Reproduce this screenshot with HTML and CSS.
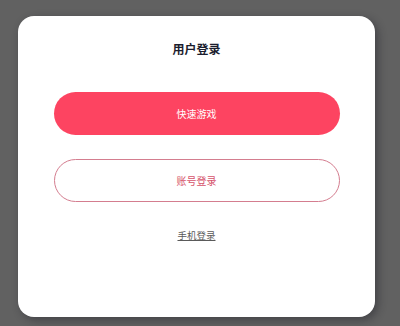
FILE: index.html
```html
<!DOCTYPE html>
<html lang="zh">
<head>
<meta charset="utf-8">
<link rel="stylesheet" href="styles.css">
</head>
<body>
<div class="card">
  <div class="title">用户登录</div>
  <button class="btn btn-primary">快速游戏</button>
  <button class="btn btn-outline">账号登录</button>
  <a class="link" href="#">手机登录</a>
</div>
</body>
</html>
```
FILE: styles.css
```css
html, body {
  margin: 0;
  padding: 0;
}
body {
  background: #616161;
  font-family: "Noto Sans CJK SC", "Noto Sans", sans-serif;
  width: 400px;
  height: 326px;
  overflow: hidden;
}
.card {
  margin: 16px 0 0 18px;
  width: 357px;
  height: 301px;
  box-sizing: border-box;
  background: #ffffff;
  border-radius: 16px;
  box-shadow: 3px 3px 8px rgba(30, 30, 40, 0.45);
  display: flex;
  flex-direction: column;
  align-items: center;
  padding-top: 25px;
}
.title {
  font-size: 12px;
  line-height: 16px;
  font-weight: 700;
  color: #1b1d2e;
}
.btn {
  width: 286px;
  height: 43px;
  border-radius: 22px;
  font-family: inherit;
  font-size: 10px;
  cursor: pointer;
  padding: 0;
}
.btn-primary {
  margin-top: 35px;
  background: #fd4461;
  border: none;
  color: #ffffff;
}
.btn-outline {
  margin-top: 24px;
  background: #ffffff;
  border: 1px solid #d47d8f;
  color: #d6536b;
}
.link {
  margin-top: 26px;
  font-size: 9.5px;
  line-height: 14px;
  color: #5a5a5a;
  text-decoration: underline;
}
```
